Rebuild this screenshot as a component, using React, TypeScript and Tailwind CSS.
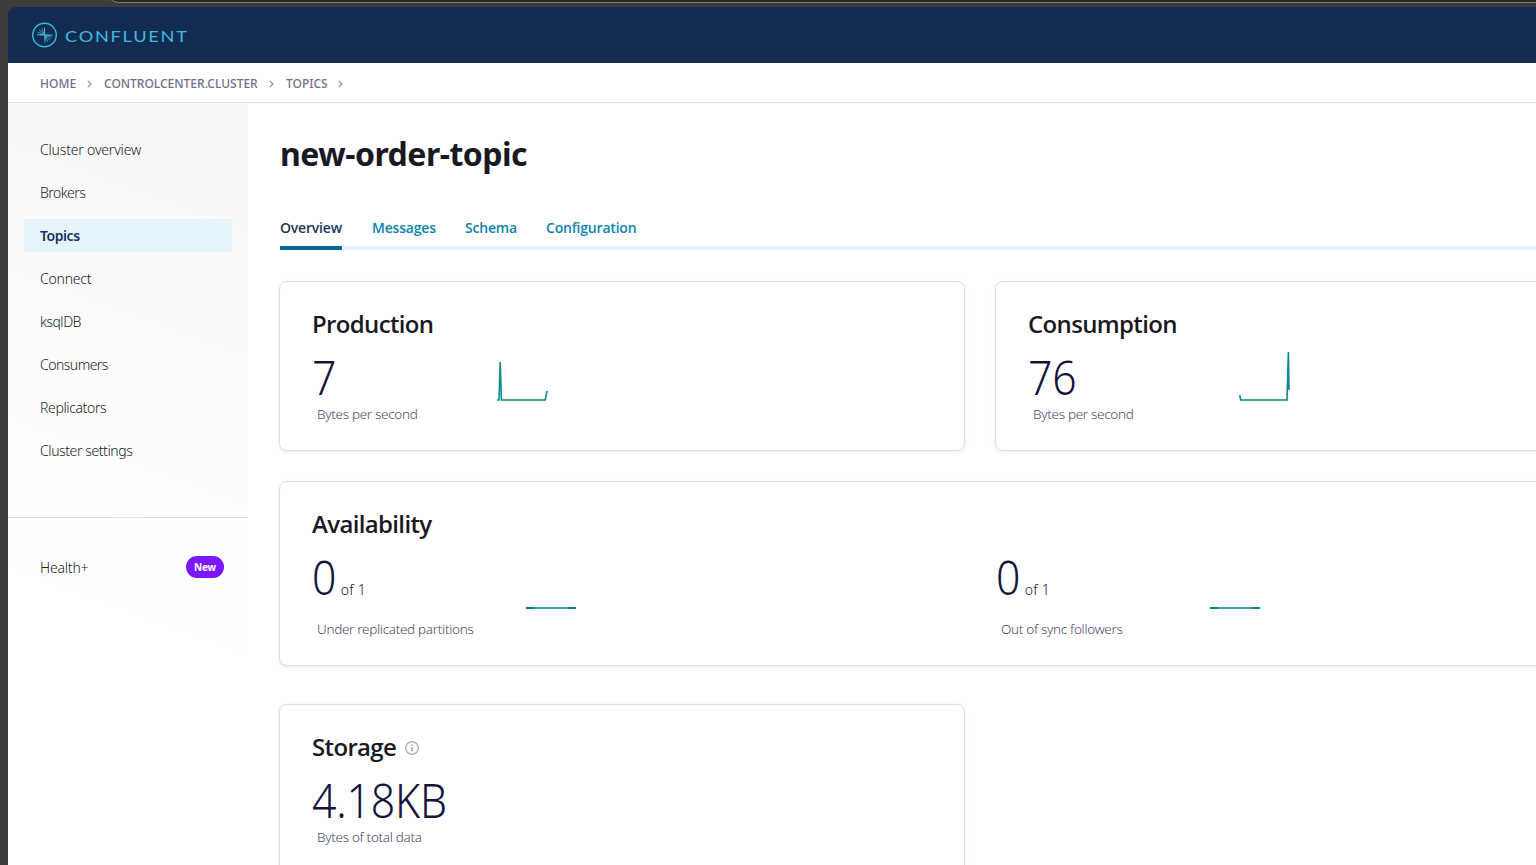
import type { ReactNode } from "react";

function Logo() {
  return (
    <svg className="size-[26px] shrink-0" viewBox="0 0 26 26" fill="none" stroke="#3cbbdf">
      <circle cx="12.5" cy="13" r="11.8" strokeWidth="1.4" />
      <path d="M12.5 5.5V13M5 12.8H12.5M13 13.2H20.5M13 13V20.5" strokeWidth="1" />
      <path d="M12.5 13L9.8 6.4M12.5 13L7.2 7.8M12.5 13L5.8 10.2M13 13l2.7 6.6M13 13l5.3 5.4M13 13l6.7 2.8" strokeWidth="0.75" />
      <path d="M12 8.5H13V12.4L17.5 12.8V13.6H13.4V17.5H12.5V13.6L8 13.2V12.4H12z" fill="#3cbbdf" stroke="none" />
    </svg>
  );
}

function Chevron() {
  return (
    <svg className="h-2 w-[5px] shrink-0" viewBox="0 0 5 8" fill="none" stroke="#8d8ba0" strokeWidth="1.2">
      <path d="M0.8 0.8L4 4L0.8 7.2" />
    </svg>
  );
}

const navItems = [
  { label: "Cluster overview", tracking: "tracking-[-0.18px]" },
  { label: "Brokers", tracking: "tracking-[-0.55px]" },
  { label: "Topics", tracking: "tracking-[-0.45px]", active: true },
  { label: "Connect", tracking: "tracking-[-0.22px]" },
  { label: "ksqlDB", tracking: "tracking-[-0.5px]" },
  { label: "Consumers", tracking: "tracking-[-0.52px]" },
  { label: "Replicators", tracking: "tracking-[-0.37px]" },
  { label: "Cluster settings", tracking: "tracking-[-0.41px]" },
];

const tabs = [
  { label: "Overview", width: "w-[62px]", active: true },
  { label: "Messages", width: "w-[63px]" },
  { label: "Schema", width: "w-[51px]" },
  { label: "Configuration", width: "w-[91px]" },
];

function Card({ className, children }: { className: string; children: ReactNode }) {
  return (
    <section className={"shrink-0 rounded-lg border border-[#dfdfe3] bg-white px-8 shadow-[0_1px_4px_rgba(0,0,0,0.09)] " + className}>
      {children}
    </section>
  );
}

function Heading({ children }: { children: ReactNode }) {
  return <h2 className="font-['Open_Sans',sans-serif] text-[24px] leading-8 font-semibold tracking-[-0.65px] text-[#191924]">{children}</h2>;
}

function Value({ children }: { children: ReactNode }) {
  return (
    <span className="inline-block origin-left scale-x-[0.89] text-[48px] leading-[50px] font-light tracking-[-0.2px] text-[#14143a]">{children}</span>
  );
}

function Caption({ children }: { children: ReactNode }) {
  return <p className="pl-[5px] text-[13.5px] leading-5 font-light tracking-[-0.31px] whitespace-nowrap text-[#4a4964]">{children}</p>;
}

function FlatLine() {
  return (
    <svg className="mt-[67px] h-[2px] w-[50px] shrink-0" viewBox="0 0 50 2">
      <path d="M0 1H50" stroke="#40a2a8" strokeWidth="2" />
      <path d="M0 1H8M42 1H50" stroke="#00838b" strokeWidth="2" />
    </svg>
  );
}

function Replica({ label }: { label: string }) {
  return (
    <div className="flex w-[684px] shrink-0 items-start">
      <div className="w-[214px]">
        <div className="flex h-[70px] items-baseline pt-3">
          <Value>0</Value>
          <span className="ml-[1.5px] text-[14px] font-light tracking-[0.3px] text-[#14143a]">of 1</span>
        </div>
        <div className="mt-[9px]">
          <Caption>{label}</Caption>
        </div>
      </div>
      <FlatLine />
    </div>
  );
}

export default function App() {
  return (
    <div className="flex h-[865px] w-[1536px] flex-col overflow-hidden bg-[#3c3c3c] pl-2 font-['Noto_Sans',sans-serif]">
      <div className="h-[7px] shrink-0 overflow-hidden pl-[97px]">
        <div className="-mt-[26px] h-[29px] w-[1500px] rounded-[14px] border border-[#7a7a7a] bg-[#282828]" />
      </div>
      <header className="flex h-14 shrink-0 items-center rounded-tl-lg bg-[#152c52] pl-6">
        <Logo />
        <span className="ml-[7px] inline-block origin-left scale-x-[1.14] pt-[2px] font-['Lato',sans-serif] text-[16px] leading-none tracking-[1.5px] text-[#3cbbdf]">
          CONFLUENT
        </span>
      </header>
      <nav className="flex h-10 shrink-0 items-center border-b border-[#dfdfe6] bg-white pt-0.5 pl-8 text-[12px] font-medium text-[#706f8c]">
        <span className="w-[47px]">HOME</span>
        <Chevron />
        <span className="ml-3 w-[165px]">CONTROLCENTER.CLUSTER</span>
        <Chevron />
        <span className="ml-3 w-[52px]">TOPICS</span>
        <Chevron />
      </nav>
      <div className="flex min-h-0 flex-1 bg-white">
        <aside className="w-60 shrink-0 bg-[linear-gradient(200deg,#f7f7fa_0%,#fbfbfb_30%,#ffffff_65%)]">
          <ul className="flex h-[415px] flex-col gap-2.5 border-b border-[#dfdfe3] px-4 pt-[30px]">
            {navItems.map((n) => (
              <li
                key={n.label}
                className={
                  "flex h-[33px] items-center pl-4 text-[14px] " +
                  n.tracking +
                  (n.active ? " bg-[#e5f4fb] font-semibold text-[#173361]" : " font-light text-[#191924]")
                }
              >
                {n.label}
              </li>
            ))}
          </ul>
          <div className="mt-[38px] flex h-[22px] items-center justify-between pr-6 pl-8">
            <span className="text-[14px] font-light tracking-[-0.2px] text-[#191924]">Health+</span>
            <span className="flex h-[22px] w-[38px] items-center justify-center rounded-full bg-[#7b16ff] text-[10px] font-bold tracking-[-0.2px] text-white">New</span>
          </div>
        </aside>
        <main className="flex-1 overflow-hidden pl-[31px]">
          <h1 className="mt-[27px] pl-px text-[32px] leading-[48px] font-bold tracking-[-0.5px] text-[#191924]">new-order-topic</h1>
          <div className="mt-[39px] ml-px flex h-[33px] w-[1402px] gap-[30px] border-b-4 border-[#e5f4fb]">
            {tabs.map((t) => (
              <div
                key={t.label}
                className={
                  "-mb-1 border-b-4 font-['Open_Sans',sans-serif] text-[14px] leading-[22px] font-semibold tracking-[-0.2px] whitespace-nowrap " +
                  t.width +
                  (t.active ? " border-[#006a9b] text-[#223659]" : " border-transparent text-[#0d83b0]")
                }
              >
                {t.label}
              </div>
            ))}
          </div>
          <div className="mt-[31px] flex gap-[30px]">
            <Card className="h-[170px] w-[686px] pt-[26px]">
              <Heading>Production</Heading>
              <div className="flex items-start">
                <div className="w-[184px]">
                  <div className="flex h-16 items-baseline pt-3">
                    <Value>7</Value>
                  </div>
                  <Caption>Bytes per second</Caption>
                </div>
                <svg className="mt-[11px] h-[52px] w-[54px]" viewBox="0 0 54 52" fill="none" stroke="#0d8990" strokeWidth="1.6">
                  <path d="M1 49H3L4.2 11L5.4 49H49.3L51 40" />
                </svg>
              </div>
            </Card>
            <Card className="h-[170px] w-[686px] pt-[26px]">
              <Heading>Consumption</Heading>
              <div className="flex items-start">
                <div className="w-[210px]">
                  <div className="flex h-16 items-baseline pt-3">
                    <Value>76</Value>
                  </div>
                  <Caption>Bytes per second</Caption>
                </div>
                <svg className="mt-[11px] h-[52px] w-[54px]" viewBox="0 0 54 52" fill="none" stroke="#0d8990" strokeWidth="1.6">
                  <path d="M1.7 44L2.7 49H49L50.4 1L51 39" />
                </svg>
              </div>
            </Card>
          </div>
          <Card className="mt-[30px] h-[185px] w-[1402px] pt-[26px]">
            <Heading>Availability</Heading>
            <div className="flex">
              <Replica label="Under replicated partitions" />
              <Replica label="Out of sync followers" />
            </div>
          </Card>
          <Card className="mt-[38px] h-[170px] w-[686px] pt-[26px]">
            <div className="flex items-center gap-[7.5px]">
              <Heading>Storage</Heading>
              <svg className="mt-0.5 size-4" viewBox="0 0 16 16" fill="none" stroke="#a9a7ba">
                <circle cx="8" cy="8" r="6.4" strokeWidth="1.3" />
                <path d="M8 7.2V11.4M8 4.4V6" strokeWidth="1.6" />
              </svg>
            </div>
            <div className="flex h-16 items-baseline pt-3">
              <Value>4.18KB</Value>
            </div>
            <Caption>Bytes of total data</Caption>
          </Card>
        </main>
      </div>
    </div>
  );
}
